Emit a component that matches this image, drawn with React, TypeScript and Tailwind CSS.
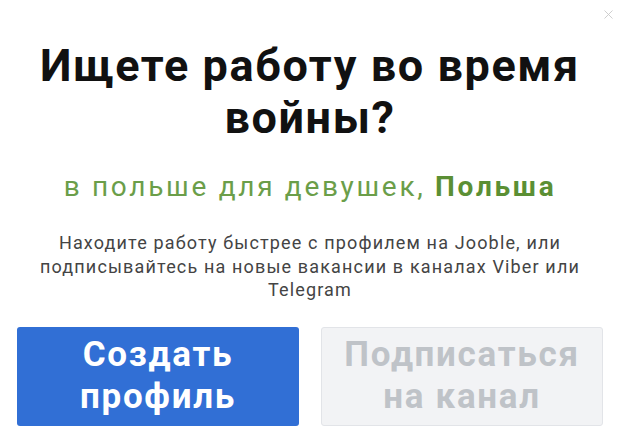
import { X } from "lucide-react";

export default function App() {
  return (
    <div className="relative h-[444px] w-[620px] overflow-hidden bg-white font-['Roboto',sans-serif]">
      <button className="absolute right-[4px] top-[7px] text-[#c8c8c8]">
        <X size={15} strokeWidth={1.4} />
      </button>

      <div className="flex flex-col items-center px-[17px] pt-[40px]">
        <h1 className="text-center text-[45px] font-bold leading-[52px] tracking-[1.6px] text-[#111]">
          Ищете работу во время
          <br />
          войны?
        </h1>

        <p className="mt-[26px] whitespace-nowrap text-center text-[28px] leading-[34px] tracking-[2.7px] text-[#6b9e49]">
          в польше для девушек, <span className="font-bold text-[#5b8f34]">Польша</span>
        </p>

        <p className="mt-[27px] text-center text-[18px] leading-[23.5px] tracking-[1.15px] text-[#444]">
          Находите работу быстрее с профилем на Jooble, или
          <br />
          подписывайтесь на новые вакансии в каналах Viber или
          <br />
          Telegram
        </p>

        <div className="mt-[25px] grid w-full grid-cols-2 gap-[22px]">
          <button className="h-[99px] rounded-[3px] bg-[#316fd5] text-[35px] font-bold leading-[42px] tracking-[1.7px] text-white">
            Создать
            <br />
            профиль
          </button>
          <button className="h-[99px] rounded-[3px] border border-[#e2e4e8] bg-[#f2f3f5] text-[35px] font-bold leading-[42px] tracking-[1.7px] text-[#bfc3c8]">
            Подписаться
            <br />
            на канал
          </button>
        </div>
      </div>
    </div>
  );
}
